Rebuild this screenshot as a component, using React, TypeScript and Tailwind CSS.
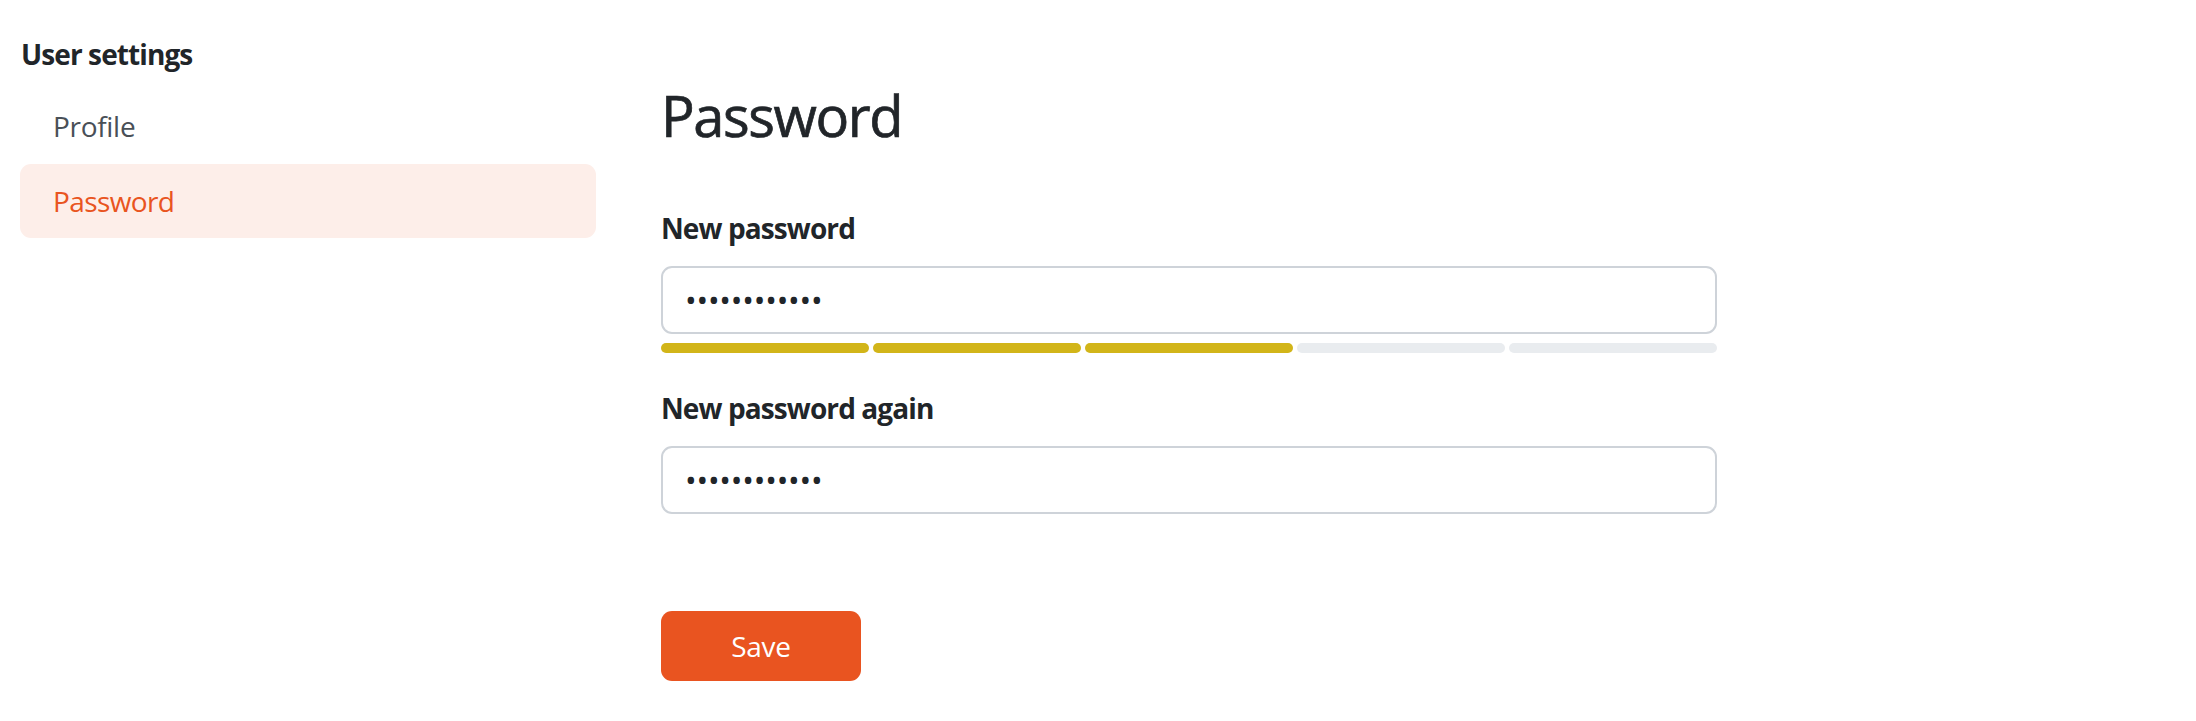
import React from "react";

function PasswordInput() {
  return (
    <input
      type="password"
      defaultValue="abcdefghijkl"
      readOnly
      className="block w-full h-[68px] rounded-[11px] border-2 border-[#ced3d9] bg-white px-[22px] text-[31px] tracking-[-0.2px] text-[#212529] outline-none font-['Open_Sans',sans-serif]"
    />
  );
}

export default function App() {
  const segments = [true, true, true, false, false];
  return (
    <div className="min-h-screen bg-white flex text-[#212529] font-['Open_Sans',sans-serif]">
      <aside className="w-[576px] ml-[20px] pt-[38px] shrink-0">
        <div className="text-[28px] font-bold leading-[33.6px] pl-[1px] tracking-[-0.9px]">User settings</div>
        <nav className="mt-[18px] flex flex-col">
          <a className="block px-[33px] pt-[15px] pb-[17px] text-[28px] leading-[42px] text-[#495057] rounded-[11px] tracking-[-0.3px]">
            Profile
          </a>
          <a className="block px-[33px] pt-[16px] pb-[16px] text-[28px] leading-[42px] text-[#e95420] bg-[#fdeee9] rounded-[11px] tracking-[-0.6px]">
            Password
          </a>
        </nav>
      </aside>
      <main className="ml-[65px] w-[1056px] pt-[82px]">
        <h1 className="text-[56px] leading-[67px] font-normal tracking-[-1.4px] [-webkit-text-stroke:0.7px_#212529]">
          Password
        </h1>
        <label className="block mt-[58px] mb-[17px] text-[28px] leading-[42px] font-bold tracking-[-0.9px]">
          New password
        </label>
        <PasswordInput />
        <div className="mt-[9px] flex gap-[4px]">
          {segments.map((on, i) => (
            <div
              key={i}
              className={
                "flex-1 h-[10px] rounded-full " + (on ? "bg-[#d2b519]" : "bg-[#e9ecef]")
              }
            />
          ))}
        </div>
        <label className="block mt-[34px] mb-[17px] text-[28px] leading-[42px] font-bold tracking-[-0.9px]">
          New password again
        </label>
        <PasswordInput />
        <button className="mt-[97px] w-[200px] h-[70px] rounded-[11px] bg-[#e95420] text-white text-[28px] leading-[42px] tracking-[-0.3px]">
          Save
        </button>
      </main>
    </div>
  );
}
